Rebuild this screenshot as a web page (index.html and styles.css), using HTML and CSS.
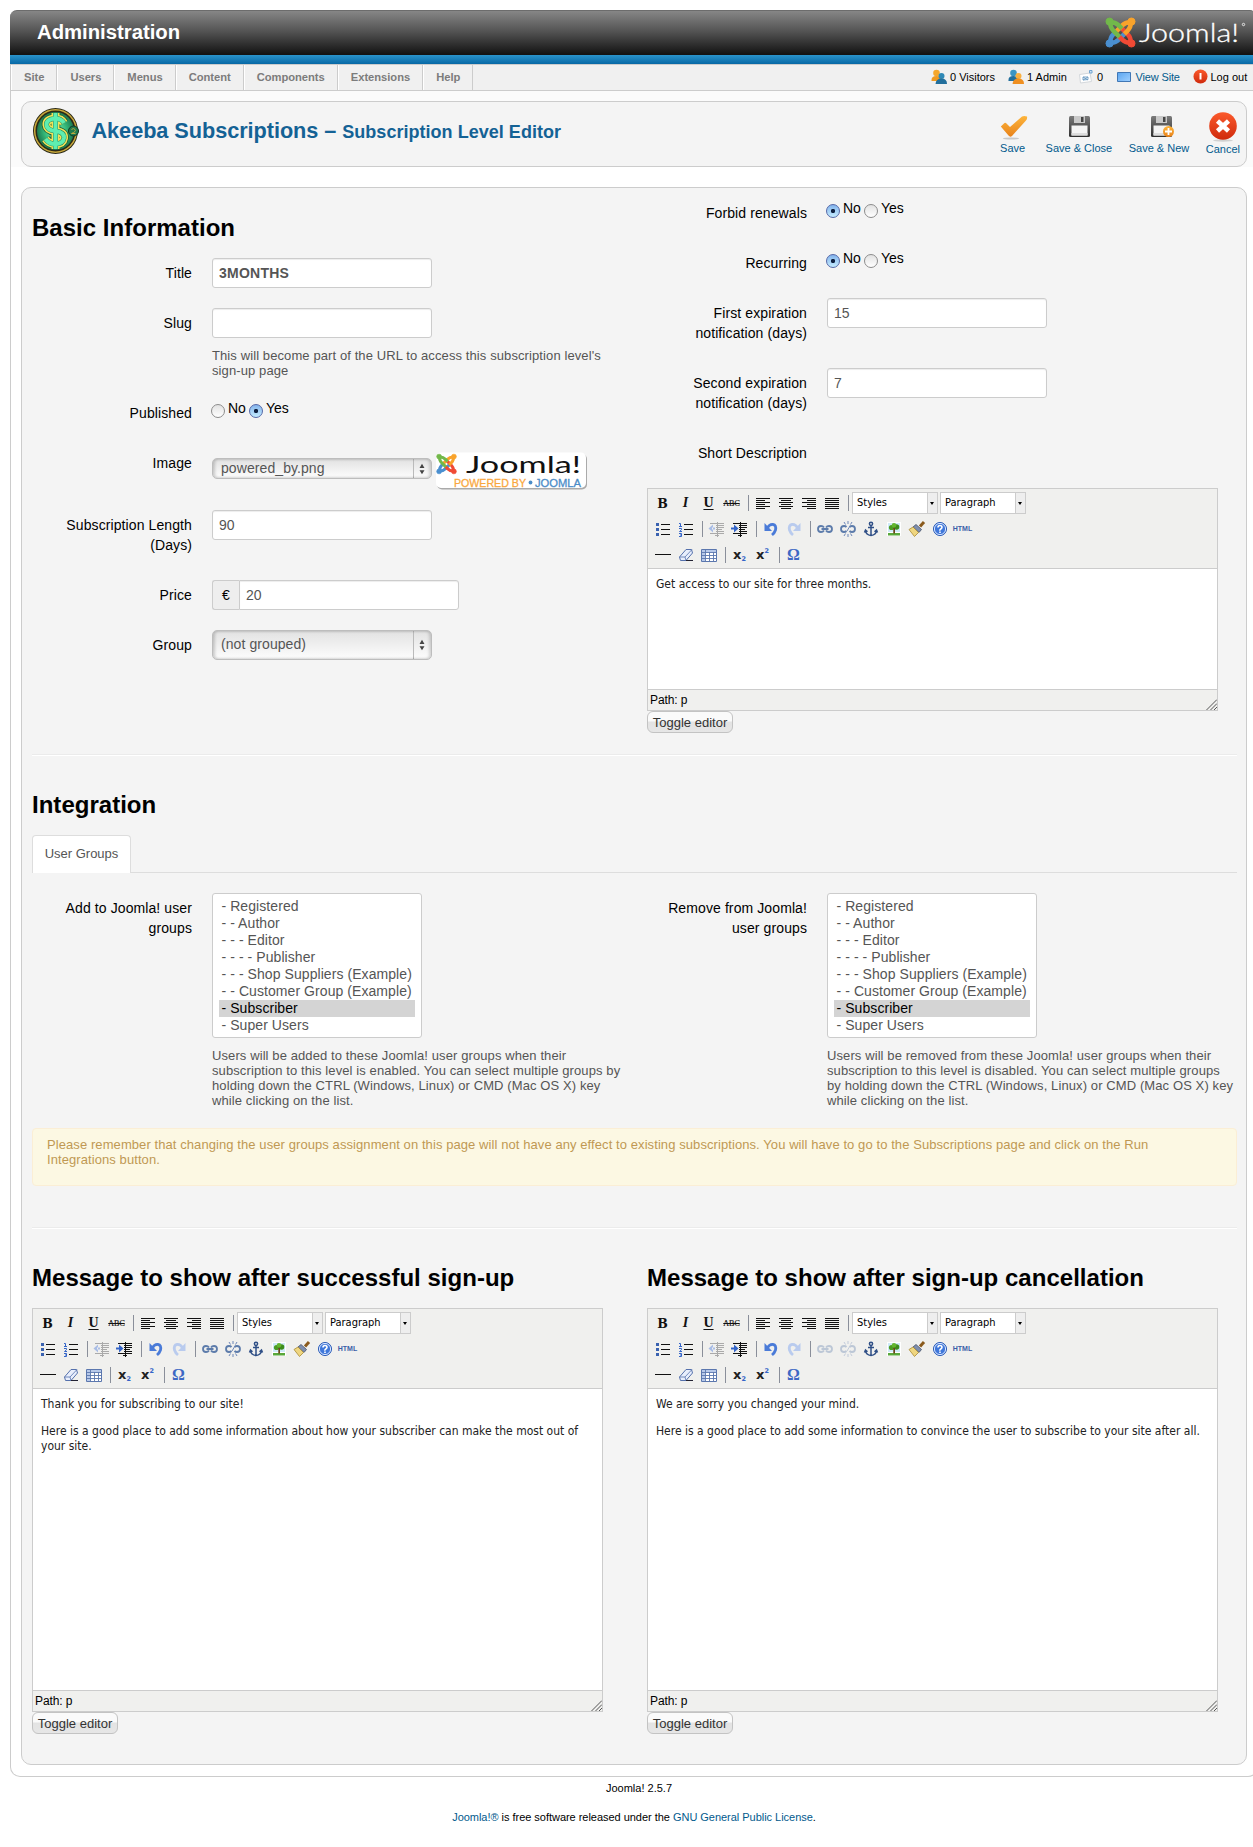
FILE: index.html
```html
<!DOCTYPE html>
<html lang="en">
<head>
<meta charset="utf-8">
<title>Administration - Subscription Level Editor</title>
<link rel="stylesheet" href="styles.css">
</head>
<body>
<svg class="sprite" width="0" height="0" aria-hidden="true">
  <defs>
    <linearGradient id="gOrange" x1="0" y1="0" x2="0" y2="1"><stop offset="0" stop-color="#fdb53c"/><stop offset="1" stop-color="#e8821a"/></linearGradient>
    <linearGradient id="gRed" x1="0" y1="0" x2="0" y2="1"><stop offset="0" stop-color="#fb5a2c"/><stop offset="1" stop-color="#cf2a0c"/></linearGradient>
    <linearGradient id="gDisk" x1="0" y1="0" x2="0" y2="1"><stop offset="0" stop-color="#7b7b7b"/><stop offset="1" stop-color="#2f2f2f"/></linearGradient>
    <linearGradient id="gScreen" x1="0" y1="0" x2="1" y2="1"><stop offset="0" stop-color="#5aa5f0"/><stop offset="1" stop-color="#9fd0ff"/></linearGradient>
    <radialGradient id="gCoin"><stop offset="0" stop-color="#7dfcc0"/><stop offset=".6" stop-color="#35b878"/><stop offset="1" stop-color="#1d7a50"/></radialGradient>
    <path id="strand" d="M15 20.500 9 14.500Q5 10.500 5.500 5.500 10.500 5 14.500 9L17.500 12" fill="none" stroke-width="4.700"/>
    <path id="dollar" d="M32 16Q29 11 22.500 11.500 14 12.500 14.500 18 15 23 23 24 32.500 25 32 31 31 37 23 37 17 37 13.500 32M23.500 6v36" fill="none"/>
  </defs>
  <symbol id="joomla" viewBox="0 0 32 32">
    <g stroke="#4a8fd0" fill="#4a8fd0" transform="rotate(270 16 16)"><use href="#strand"/><circle cx="4.700" cy="4.700" r="3.700"/></g>
    <g stroke="#f04a35" fill="#f04a35" transform="rotate(180 16 16)"><use href="#strand"/><circle cx="4.700" cy="4.700" r="3.700"/></g>
    <g stroke="#f9a32b" fill="#f9a32b" transform="rotate(90 16 16)"><use href="#strand"/><circle cx="4.700" cy="4.700" r="3.700"/></g>
    <g stroke="#72b84a" fill="#72b84a"><use href="#strand"/><circle cx="4.700" cy="4.700" r="3.700"/></g>
  </symbol>
  <symbol id="disk" viewBox="0 0 22 24">
    <path d="M1 2.500Q1 1 2.500 1H20.500Q22 1 22 2.500V20.500Q22 22 20.500 22H2.500Q1 22 1 20.500Z" fill="url(#gDisk)"/>
    <path d="M6 1h11v7H6z" fill="#c9c9c9"/><path d="M13 2h2.500v5H13z" fill="#444"/>
    <path d="M3.500 10.500h16v10h-16z" fill="#f4f4f4"/><path d="M3.500 18h16v2.500h-16z" fill="#ddd"/>
  </symbol>
  <symbol id="people-a" viewBox="0 0 16 16">
    <circle cx="5.500" cy="4" r="3.300" fill="#f5a72c"/><path d="M.5 12Q0 7 5.500 7T11 12Z" fill="#f09a20"/>
    <circle cx="10.500" cy="7" r="3" fill="#2f88b5"/><path d="M4.500 15Q5 9.500 10.500 9.500T16 15Z" fill="#226f9c"/>
  </symbol>
  <symbol id="people-b" viewBox="0 0 16 16">
    <circle cx="5.500" cy="4" r="3.300" fill="#3a95c4"/><path d="M.5 12Q0 7 5.500 7T11 12Z" fill="#226f9c"/>
    <circle cx="10.500" cy="7" r="3" fill="#f9b040"/><path d="M4.500 15Q5 9.500 10.500 9.500T16 15Z" fill="#ef8f20"/>
  </symbol>

  <symbol id="i-left" viewBox="0 0 20 20"><path d="M3 5.500h14M3 7.500h9M3 9.500h14M3 11.500h9M3 13.500h14M3 15.500h9" stroke="#111"/></symbol>
  <symbol id="i-center" viewBox="0 0 20 20"><path d="M3 5.500h14M5 7.500h10M3 9.500h14M5 11.500h10M3 13.500h14M5 15.500h10" stroke="#111"/></symbol>
  <symbol id="i-right" viewBox="0 0 20 20"><path d="M3 5.500h14M8 7.500h9M3 9.500h14M8 11.500h9M3 13.500h14M8 15.500h9" stroke="#111"/></symbol>
  <symbol id="i-full" viewBox="0 0 20 20"><path d="M3 5.500h14M3 7.500h14M3 9.500h14M3 11.500h14M3 13.500h14M3 15.500h14" stroke="#111"/></symbol>
  <symbol id="i-ul" viewBox="0 0 20 20"><path d="M8 5.500h9M8 10.500h9M8 15.500h9" stroke="#111"/><path d="M3 4h3v3H3zM3 9h3v3H3zM3 14h3v3H3z" fill="#3a62b0"/></symbol>
  <symbol id="i-ol" viewBox="0 0 20 20"><path d="M8 5.500h9M8 10.500h9M8 15.500h9" stroke="#111"/><path d="M3 4.500h1.500V7M3 7.500h3M3 9.500h2.500v1.200L3.500 12.500h2.500M3 14.500h2.500v3H3M4 16h1.500" fill="none" stroke="#3465c8"/></symbol>
  <symbol id="i-outdent" viewBox="0 0 20 20"><path d="M3 4.500h14M9 6.500h8M9 8.500h8M9 10.500h6M9 12.500h8M3 14.500h14M8 16.500h4" stroke="#aaa"/><path d="M10.500 3v15" stroke="#aaa" stroke-dasharray="1 1"/><path d="M6 5.500 1.500 9.500 6 13.500zM5 8.500h3v2H5z" fill="#a9bde6"/></symbol>
  <symbol id="i-indent" viewBox="0 0 20 20"><path d="M3 4.500h14M9 6.500h8M9 8.500h8M9 10.500h6M9 12.500h8M3 14.500h14M8 16.500h4" stroke="#111"/><path d="M10.500 3v15" stroke="#111" stroke-dasharray="1 1"/><path d="M4 5.500 8.500 9.500 4 13.500zM1 8.500h4v2H1z" fill="#3465c8"/></symbol>
  <symbol id="i-undo" viewBox="0 0 20 20"><path d="M6 9.500Q8.500 5 12 5.500T14.500 11Q13.500 14 11 16" fill="none" stroke="#4a7bd8" stroke-width="2.800"/><path d="M3.500 4v8h7.500z" fill="#4a7bd8"/></symbol>
  <symbol id="i-redo" viewBox="0 0 20 20"><path d="M14 9.500Q11.500 5 8 5.500T5.500 11Q6.500 14 9 16" fill="none" stroke="#b9cbee" stroke-width="2.800"/><path d="M16.500 4v8H9z" fill="#b9cbee"/></symbol>
  <symbol id="i-link" viewBox="0 0 20 20"><g fill="none" stroke="#5d7cab" stroke-width="1.800"><path d="M9 8.500Q8 7 6 7 3 7 3 10t3 3q2 0 3-1.500M11 8.500Q12 7 14 7q3 0 3 3t-3 3q-2 0-3-1.500M6.500 10h7"/></g></symbol>
  <symbol id="i-unlink" viewBox="0 0 20 20"><g fill="none" stroke="#5d7cab" stroke-width="1.800"><path d="M8.500 8Q7.500 7 6 7 3 7 3 10t3 3q1.500 0 2.500-1M11.500 8Q12.500 7 14 7q3 0 3 3t-3 3q-1.500 0-2.500-1"/></g><path d="M10 2v3M10 15v3M6 3l1.500 2.500M14 3l-1.500 2.500M6 17l1.500-2.500M14 17l-1.500-2.500M9 12l3-5" stroke="#6d87b8" fill="none"/></symbol>
  <symbol id="i-anchor" viewBox="0 0 20 20"><g fill="none" stroke="#2f4f86" stroke-width="1.500"><circle cx="10" cy="4.800" r="1.600"/><path d="M10 6.500v10M7 8.500h6M4.500 11.500Q5 16 10 16.500 15 16 15.500 11.500M3.500 13.500l1-2.500 2 1.800M16.500 13.500l-1-2.500-2 1.800"/></g></symbol>
  <symbol id="i-image" viewBox="0 0 20 20"><path d="M3 3h14v14H3z" fill="#fff"/><path d="M4 4h12v9H4z" fill="#cfeaf8"/><path d="M4 14h12v2.500H4z" fill="#58a83a"/><circle cx="7.500" cy="8.500" r="2.600" fill="#4c9b22"/><circle cx="12.500" cy="8" r="2.800" fill="#3c8c1a"/><circle cx="10" cy="6.300" r="2.300" fill="#63b52e"/><path d="M9.300 9h1.700v5.500H9.300z" fill="#6a4418"/></symbol>
  <symbol id="i-clean" viewBox="0 0 20 20"><path d="M17 3 13 7.500" stroke="#8a5a1c" stroke-width="3"/><path d="M9 5.500 14.500 10.500 12 13.500 6 8z" fill="#7f8fae" stroke="#44506a" stroke-width=".8"/><path d="M6 8 11.500 13.500 7.500 17.500 2 10.500z" fill="#efd680" stroke="#a88a34" stroke-width=".8"/></symbol>
  <symbol id="i-help" viewBox="0 0 20 20"><circle cx="10" cy="10" r="6.500" fill="#3f77da" stroke="#2758b4"/><circle cx="10" cy="10" r="5.600" fill="none" stroke="#d6e4ff"/><path d="M8 8.500Q8 6.500 10 6.500T12 8.300Q12 9.300 10.800 10T10 11.700M10 12.600v1.500" stroke="#fff" stroke-width="1.600" fill="none"/></symbol>
  <symbol id="i-rule" viewBox="0 0 20 20"><path d="M2 9.500h16" stroke="#111"/></symbol>
  <symbol id="i-eraser" viewBox="0 0 20 20"><path d="M3.500 12 10 4.500h5.500L16.500 8 10 15.500H4.500z" fill="#e8eefc" stroke="#5571ac"/><path d="M3.500 12h5.500l7-7.500M9 12l1 3.500" fill="none" stroke="#5571ac" stroke-width=".8"/><path d="M10 15.500h7" stroke="#223"/></symbol>
  <symbol id="i-table" viewBox="0 0 20 20"><path d="M2.500 4.500h15v12h-15z" fill="#fff" stroke="#5b77ae"/><path d="M3 5h14v2.500H3zM3 5h3v11H3z" fill="#b7c9ea"/><path d="M2.500 7.500h15M2.500 10.500h15M2.500 13.500h15M6.500 4.500v12M10.500 7v9.500M14.500 7v9.500" stroke="#5b77ae" stroke-width=".9"/></symbol>
  <symbol id="i-grip" viewBox="0 0 12 12"><path d="M1.500 12 12 1.500M5.500 12 12 5.500M9 12l3-3" stroke="#555"/></symbol>
</svg>

<template id="editor-toolbar">
  <div class="tb-row">
    <span class="tb-btn tb-serif tb-b">B</span><span class="tb-btn tb-serif tb-i">I</span><span class="tb-btn tb-serif tb-u">U</span><span class="tb-btn tb-serif tb-s">ABC</span><span class="tb-sep"></span>
    <svg class="tb-btn"><use href="#i-left"/></svg><svg class="tb-btn"><use href="#i-center"/></svg><svg class="tb-btn"><use href="#i-right"/></svg><svg class="tb-btn"><use href="#i-full"/></svg><span class="tb-sep"></span>
    <span class="tb-select tb-select-first">Styles<i></i></span><span class="tb-select">Paragraph<i></i></span>
  </div>
  <div class="tb-row">
    <svg class="tb-btn"><use href="#i-ul"/></svg><svg class="tb-btn"><use href="#i-ol"/></svg><span class="tb-sep"></span>
    <svg class="tb-btn"><use href="#i-outdent"/></svg><svg class="tb-btn"><use href="#i-indent"/></svg><span class="tb-sep"></span>
    <svg class="tb-btn"><use href="#i-undo"/></svg><svg class="tb-btn"><use href="#i-redo"/></svg><span class="tb-sep"></span>
    <svg class="tb-btn tb-link"><use href="#i-link"/></svg><svg class="tb-btn tb-link"><use href="#i-unlink"/></svg><svg class="tb-btn"><use href="#i-anchor"/></svg><svg class="tb-btn"><use href="#i-image"/></svg><svg class="tb-btn"><use href="#i-clean"/></svg><svg class="tb-btn"><use href="#i-help"/></svg><span class="tb-btn tb-html">HTML</span>
  </div>
  <div class="tb-row">
    <svg class="tb-btn"><use href="#i-rule"/></svg><svg class="tb-btn"><use href="#i-eraser"/></svg><svg class="tb-btn"><use href="#i-table"/></svg><span class="tb-sep"></span>
    <span class="tb-btn tb-x">x<sub>2</sub></span><span class="tb-btn tb-x">x<sup>2</sup></span><span class="tb-sep"></span>
    <span class="tb-btn tb-omega">Ω</span>
  </div>
</template>

<div class="page">
  <header class="header">
    <h1 class="site-title">Administration</h1>
    <svg class="brand" width="142" height="34" viewBox="0 0 142 34"><use href="#joomla" x="0" y="1" width="31" height="31"/><text class="brand-text" x="34" y="25.500" textLength="100" lengthAdjust="spacingAndGlyphs">Joomla!</text><circle cx="138.500" cy="8.500" r="1.200" fill="none" stroke="#fff" stroke-width=".8"/></svg>
  </header>
  <div class="stripe"></div>
  <nav class="menubar">
    <ul class="menu">
      <li>Site</li><li>Users</li><li>Menus</li><li>Content</li><li>Components</li><li>Extensions</li><li>Help</li>
    </ul>
    <div class="status">
      <span class="st st-visitors"><svg width="16" height="16"><use href="#people-a"/></svg>0 Visitors</span>
      <span class="st st-admin"><svg width="16" height="16"><use href="#people-b"/></svg>1 Admin</span>
      <span class="st st-msg"><svg width="16" height="16" viewBox="0 0 16 16"><path d="M1.500 5.500 12 4l1.500 8.500L2.500 14z" fill="#fff" stroke="#d4d8dc"/><path d="M5 8l5 3M5 11l5-3M5 8v3l5-.5V8z" stroke="#6b9cc4" stroke-width=".9" fill="none"/><path d="M11.500 1.500h2.500V4h-2.500z" fill="#cfe3f5" stroke="#6fa3d0"/></svg>0</span>
      <span class="st st-view"><svg width="15" height="16" viewBox="0 0 15 16"><path d="M.5 3.500h13v9H.5z" fill="url(#gScreen)" stroke="#4177b5"/></svg>View Site</span>
      <span class="st st-logout"><svg width="15" height="16" viewBox="0 0 15 16"><circle cx="7.500" cy="7.500" r="7" fill="url(#gRed)"/><path d="M7.500 4v6.500" stroke="#fff" stroke-width="2"/></svg>Log out</span>
    </div>
  </nav>

  <div class="toolbar-area">
    <div class="toolbar-box">
      <svg class="coin" width="48" height="48" viewBox="0 0 48 48"><ellipse cx="23.500" cy="24" rx="22.500" ry="23" fill="#2b2a16"/><ellipse cx="23.500" cy="24" rx="20.800" ry="21.200" fill="none" stroke="#c9a83c" stroke-width="1.500"/><ellipse cx="23.500" cy="24" rx="18.500" ry="19" fill="url(#gCoin)"/><use href="#dollar" stroke="#1c5a33" stroke-width="9.500"/><use href="#dollar" stroke="#f2e358" stroke-width="8"/><use href="#dollar" stroke="#2c8a5c" stroke-width="5"/><use href="#dollar" stroke="#5eeeb0" stroke-width="4"/><circle cx="41.500" cy="24" r="5" fill="#1f7a4c" stroke="#12331f"/><path d="M39.500 22.500q2-2 3.500 0t-3.500 4h4" fill="none" stroke="#bfa83c"/></svg>
      <h2 class="page-title">Akeeba Subscriptions – <small>Subscription Level Editor</small></h2>
      <ul class="actions">
        <li class="a-save"><svg width="28" height="28" viewBox="0 0 28 28"><ellipse cx="11" cy="26.500" rx="8" ry="1" fill="#c8c8c8"/><path d="M.8 14.500 4.500 11 Q5.500 10.500 6.500 11.500L10 15 22 4.500Q24 3.500 27 4.500 27.500 7 26 8.500L12 24Q10 25.500 8.500 23.500Z" fill="url(#gOrange)"/></svg>Save</li>
        <li class="a-close"><svg width="22" height="28" viewBox="0 0 22 28"><use href="#disk" y="3" width="22" height="24"/></svg>Save &amp; Close</li>
        <li class="a-new"><svg width="28" height="28" viewBox="0 0 28 28"><use href="#disk" x="3" y="3" width="22" height="24"/><circle cx="21.500" cy="19.500" r="5.500" fill="url(#gOrange)"/><path d="M21.500 16v7M18 19.500h7" stroke="#fff" stroke-width="1.800"/></svg>Save &amp; New</li>
        <li class="a-cancel"><svg width="28" height="30" viewBox="0 0 28 30"><ellipse cx="14" cy="28.500" rx="10" ry="1.200" fill="#d0d0d0"/><circle cx="14" cy="14" r="13.800" fill="url(#gRed)"/><path d="M8.500 9 19.500 19M19.500 9 8.500 19" stroke="#fff" stroke-width="4.600"/></svg>Cancel</li>
      </ul>
    </div>
  </div>

  <main class="content">
    <section class="cols basic">
      <div>
        <h3 class="heading heading-first">Basic Information</h3>
        <div class="row"><label>Title</label><div class="control"><input class="text strong" value="3MONTHS"></div></div>
        <div class="row"><label>Slug</label><div class="control"><input class="text" value=""><p class="help">This will become part of the URL to access this subscription level's<br>sign-up page</p></div></div>
        <div class="row"><label>Published</label><div class="control radios"><input type="radio" name="pub"><span>No</span><input type="radio" name="pub" checked><span>Yes</span></div></div>
        <div class="row row-image"><label>Image</label><div class="control image-control"><div class="select select-small">powered_by.png<svg class="updown" width="6" height="12" viewBox="0 0 8 14"><path d="M4 0l3.300 5.500H.7zM4 14l3.300-5.500H.7z"/></svg></div>
          <svg class="badge" width="154" height="39" viewBox="0 0 154 39"><rect x="2" y="2" width="150" height="35.500" rx="5" fill="#aaa"/><rect x="1" y=".5" width="150" height="35.500" rx="5" fill="#fff"/><use href="#joomla" x="1" y="1" width="21" height="22"/><text class="badge-name" x="31" y="20.500" textLength="115" lengthAdjust="spacingAndGlyphs">Joomla!</text><text class="badge-sub" x="19" y="35" textLength="72" lengthAdjust="spacingAndGlyphs" fill="#f9a73e" stroke="#f9a73e">POWERED BY</text><circle cx="95.500" cy="30.500" r="1.900" fill="#4b8cc8"/><text class="badge-sub" x="100" y="35" textLength="46" lengthAdjust="spacingAndGlyphs" fill="#4b8cc8" stroke="#4b8cc8">JOOMLA</text></svg></div></div>
        <div class="row row-double"><label>Subscription Length<br>(Days)</label><div class="control"><input class="text" value="90"></div></div>
        <div class="row"><label>Price</label><div class="control prepend"><span class="addon">€</span><input class="text" value="20"></div></div>
        <div class="row"><label>Group</label><div class="control"><div class="select">(not grouped)<svg class="updown" width="6" height="12" viewBox="0 0 8 14"><path d="M4 0l3.300 5.500H.7zM4 14l3.300-5.500H.7z"/></svg></div></div></div>
      </div>
      <div>
        <div class="row"><label>Forbid renewals</label><div class="control radios"><input type="radio" name="forbid" checked><span>No</span><input type="radio" name="forbid"><span>Yes</span></div></div>
        <div class="row"><label>Recurring</label><div class="control radios"><input type="radio" name="rec" checked><span>No</span><input type="radio" name="rec"><span>Yes</span></div></div>
        <div class="row row-double"><label>First expiration<br>notification (days)</label><div class="control"><input class="text" value="15"></div></div>
        <div class="row row-double"><label>Second expiration<br>notification (days)</label><div class="control"><input class="text" value="7"></div></div>
        <div class="row"><label>Short Description</label></div>
        <div class="editor">
          <div class="editor-toolbar"></div>
          <div class="editor-body"><p>Get access to our site for three months.</p></div>
          <div class="editor-status">Path: p<svg class="grip" width="12" height="12"><use href="#i-grip"/></svg></div>
        </div>
        <button class="toggle">Toggle editor</button>
      </div>
    </section>

    <hr class="rule">
    <h3 class="heading">Integration</h3>
    <div class="tabs"><span class="tab">User Groups</span></div>
    <section class="cols">
      <div class="row"><label>Add to Joomla! user<br>groups</label><div class="control">
        <ul class="listbox"><li>- Registered</li><li>- - Author</li><li>- - - Editor</li><li>- - - - Publisher</li><li>- - - Shop Suppliers (Example)</li><li>- - Customer Group (Example)</li><li class="selected">- Subscriber</li><li>- Super Users</li></ul>
        <p class="help">Users will be added to these Joomla! user groups when their<br>subscription to this level is enabled. You can select multiple groups by<br>holding down the CTRL (Windows, Linux) or CMD (Mac OS X) key<br>while clicking on the list.</p></div></div>
      <div class="row"><label>Remove from Joomla!<br>user groups</label><div class="control">
        <ul class="listbox"><li>- Registered</li><li>- - Author</li><li>- - - Editor</li><li>- - - - Publisher</li><li>- - - Shop Suppliers (Example)</li><li>- - Customer Group (Example)</li><li class="selected">- Subscriber</li><li>- Super Users</li></ul>
        <p class="help">Users will be removed from these Joomla! user groups when their<br>subscription to this level is disabled. You can select multiple groups<br>by holding down the CTRL (Windows, Linux) or CMD (Mac OS X) key<br>while clicking on the list.</p></div></div>
    </section>
    <div class="alert">Please remember that changing the user groups assignment on this page will not have any effect to existing subscriptions. You will have to go to the Subscriptions page and click on the Run<br>Integrations button.</div>

    <hr class="rule">
    <section class="cols">
      <div>
        <h3 class="heading">Message to show after successful sign-up</h3>
        <div class="editor editor-tall">
          <div class="editor-toolbar"></div>
          <div class="editor-body"><p>Thank you for subscribing to our site!</p><p>Here is a good place to add some information about how your subscriber can make the most out of<br>your site.</p></div>
          <div class="editor-status">Path: p<svg class="grip" width="12" height="12"><use href="#i-grip"/></svg></div>
        </div>
        <button class="toggle">Toggle editor</button>
      </div>
      <div>
        <h3 class="heading">Message to show after sign-up cancellation</h3>
        <div class="editor editor-tall editor-nolink">
          <div class="editor-toolbar"></div>
          <div class="editor-body"><p>We are sorry you changed your mind.</p><p>Here is a good place to add some information to convince the user to subscribe to your site after all.</p></div>
          <div class="editor-status">Path: p<svg class="grip" width="12" height="12"><use href="#i-grip"/></svg></div>
        </div>
        <button class="toggle">Toggle editor</button>
      </div>
    </section>
  </main>
</div>
<footer class="footer">
  <p>Joomla! 2.5.7</p>
  <p class="license"><a>Joomla!®</a> is free software released under the <a>GNU General Public License</a>.</p>
</footer>
<script src="editor.js"></script>
</body>
</html>
```
FILE: editor.js
```js
// Every editor shares the same toolbar markup.
const toolbar = document.getElementById('editor-toolbar');
document.querySelectorAll('.editor-toolbar').forEach(function (host) {
  host.appendChild(toolbar.content.cloneNode(true));
});
```
FILE: styles.css
```css
* { box-sizing: border-box; }
html { overflow: hidden; }
body {
  margin: 0;
  width: 1253px;
  height: 1847px;
  overflow: hidden;
  background: #fff;
  color: #000;
  font: 14px/20px "Liberation Sans", Arial, sans-serif;
}
ul, p, h1, h2, h3 { margin: 0; padding: 0; }
ul { list-style: none; }
svg { display: block; flex: none; }
.sprite { position: absolute; }

.page {
  width: 1248px;
  margin: 10px 0 0 10px;
  border: 1px solid #ccc;
  border-top: 0;
  border-radius: 10px;
  height: 1767px;
}
.header {
  display: flex;
  justify-content: space-between;
  width: 1244px;
  height: 45px;
  margin-left: -1px;
  padding: 0 7px 0 27px;
  border-top: 1px solid #6c6c6c;
  border-radius: 7px 4px 0 0;
  background: linear-gradient(#868686, #555 45%, #111);
}
.site-title { color: #fff; font-size: 20.300px; line-height: 43px; }
.brand { margin-top: 5px; overflow: visible; }
.brand-text { font: 300 25px "Lato", sans-serif; fill: #fff; stroke: #fff; stroke-width: .3px; }
.stripe { height: 9px; margin-left: -1px; background: linear-gradient(#2a93cb, #0768a5); }

.menubar {
  display: flex;
  justify-content: space-between;
  align-items: flex-start;
  width: 1242px;
  height: 27px;
  border-top: 1px solid #ccc;
  border-bottom: 1px solid #ccc;
  background: #f0f0f0;
  line-height: 25px;
}
.menu { display: flex; font-size: 11.200px; font-weight: bold; color: #7c7c7c; }
.menu li { padding: 0 12px 0 13px; border-right: 1px solid #ccc; box-shadow: inset 1px 0 #fff; letter-spacing: -.03px; }
.status { display: flex; font-size: 11px; }
.st { display: flex; align-items: center; gap: 3px; height: 24px; white-space: nowrap; }
.st svg { margin-top: -1px; }
.st-visitors { width: 77px; }
.st-admin { width: 70px; }
.st-msg { width: 38.500px; }
.st-view { width: 76px; color: #025a8d; letter-spacing: -.15px; gap: 4px; }
.st-logout { width: 60.500px; }

.toolbar-area { padding: 10px 10px 0; background: #fbfbfb; width: 1246px; }
.toolbar-box {
  display: flex;
  height: 66px;
  padding-left: 10px;
  border: 1px solid #ccc;
  border-radius: 10px;
  background: #f4f4f4;
}
.coin { margin-top: 5px; }
.page-title { margin-left: 11.500px; font-size: 21.700px; line-height: 57px; color: #146295; white-space: nowrap; letter-spacing: -.05px; }
.page-title small { font-size: 18px; letter-spacing: .03px; }
.actions { display: flex; margin-left: auto; padding: 10px 6px 0 0; gap: 16.500px; font-size: 11px; line-height: 14px; color: #025a8d; }
.actions li { display: flex; flex-direction: column; align-items: center; height: 43px; justify-content: space-between; white-space: nowrap; }
.a-save { width: 28px; margin-right: 1px; }
.actions .a-save { align-items: flex-start; }
.a-new svg { margin-left: 4px; }

.content {
  width: 1226px;
  height: 1578px;
  margin: 20px 10px 0;
  padding: 10px 10px 0;
  border: 1px solid #ccc;
  border-radius: 10px;
  background: #f4f4f4;
}
.cols { display: grid; grid-template-columns: 571px 571px; column-gap: 44px; }
.basic { height: 556px; }
.heading { font-size: 24px; line-height: 36px; margin-bottom: 12px; white-space: nowrap; letter-spacing: .02px; }
.heading-first { margin-top: 12px; }
.rule { width: 1205px; height: 2px; margin: 0 0 31px; border: 0; border-top: 1px solid #ebebeb; border-bottom: 1px solid #fff; }

.row { display: grid; grid-template-columns: 160px 1fr; column-gap: 20px; min-height: 30px; margin-bottom: 20px; align-items: start; }
.row-image { height: 42px; }
.row-double { min-height: 50px; }
.row label { padding-top: 5px; text-align: right; white-space: nowrap; letter-spacing: .1px; }
.text {
  display: block;
  width: 220px;
  height: 30px;
  margin: 0;
  padding: 0 6px;
  border: 1px solid #ccc;
  border-radius: 3px;
  background: #fff;
  box-shadow: inset 0 1px 1px rgba(0, 0, 0, .075);
  color: #555;
  font: 14px "Liberation Sans", Arial, sans-serif;
}
.strong { font-weight: bold; letter-spacing: .25px; }
.help { margin-top: 10px; font-size: 13px; line-height: 15px; color: #555; white-space: nowrap; letter-spacing: .1px; }
.radios { display: flex; margin-left: -1px; }
.radios input {
  appearance: none;
  width: 14px;
  height: 14px;
  margin: 6px 3px 0 0;
  border: 1px solid #8c8c8c;
  border-radius: 50%;
  background: linear-gradient(#e2e2e2, #fff);
}
.radios input:checked { border-color: #5568a8; background: radial-gradient(circle, #0f2140 0 1.800px, transparent 2.500px), linear-gradient(#84b4ec, #c4ecff); }
.radios span { margin-right: 3px; }
.select {
  display: flex;
  justify-content: space-between;
  align-items: center;
  width: 220px;
  height: 30px;
  padding: 0 6px 2px 8px;
  border: 1px solid #bdbdbd;
  border-radius: 5px;
  background: linear-gradient(90deg, transparent 200px, #bbb 200px 201px, transparent 201px), linear-gradient(#e2e2e2, #fdfdfd);
  box-shadow: inset 2px 0 3px rgba(0, 0, 0, .18), inset -2px 0 3px rgba(0, 0, 0, .15);
  color: #555;
  letter-spacing: .08px;
}
.updown { margin-top: 2px; fill: #444; }
.image-control { display: flex; gap: 3px; }
.select-small { height: 21px; margin-top: 10px; padding-bottom: 2px; }
.badge { margin-top: 4px; overflow: visible; }
.badge-name { font: 400 23px "Lato", sans-serif; fill: #111; }
.badge-sub { font: 11.500px "Liberation Sans", Arial, sans-serif; stroke-width: .3px; }
.prepend { display: flex; }
.addon { width: 27px; height: 30px; border: 1px solid #ccc; border-right: 0; border-radius: 3px 0 0 3px; background: #eee; line-height: 28px; text-align: center; }
.prepend .text { border-radius: 0 3px 3px 0; }

.editor { width: 571px; height: 223px; border: 1px solid #ccc; background: #f0f0ee; display: flex; flex-direction: column; }
.editor-tall { height: 404px; }
.editor-toolbar { height: 80px; padding: 1px 0 0 3px; border-bottom: 1px solid #ccc; }
.tb-row { display: flex; align-items: center; height: 26px; }
.tb-btn { width: 20px; height: 20px; margin: 0 1.500px; flex: none; text-align: center; line-height: 20px; }
.tb-sep { width: 1px; height: 16px; margin: 0 2px 0 5px; background: #8a8f9a; flex: none; }
.tb-serif { font: bold 14px/20px "DejaVu Serif", serif; color: #111; }
.tb-b { font-size: 12.500px; line-height: 22px; }
.tb-i { font-style: italic; font-size: 14px; font-family: "Liberation Serif", serif; }
.tb-u { text-decoration: underline; font: bold 14px/20px "Liberation Serif", serif; text-underline-offset: 2px; }
.tb-s { font: 8px/22px "Liberation Serif", serif; text-decoration: line-through; -webkit-text-stroke: .2px #111; }
.tb-select {
  position: relative;
  width: 86px;
  height: 22px;
  margin: 0 2px 0 0;
  padding-left: 4px;
  border: 1px solid #ccc;
  background: #fff;
  font: 11px/20px "DejaVu Sans Condensed", "DejaVu Sans", sans-serif;
  font-stretch: condensed;
}
.tb-select-first { margin-left: 1px; }
.tb-select i { position: absolute; top: 0; right: 0; width: 10px; height: 20px; border-left: 1px solid #ccc; background: #eee; }
.tb-select i::after { content: ""; position: absolute; left: 2px; top: 9px; border: 2.500px solid transparent; border-top: 3px solid #000; border-bottom: 0; }
.tb-html { font: bold 7px/20px "Liberation Sans", Arial, sans-serif; color: #3a5ea8; }
.tb-x { font: bold 13px/20px "DejaVu Sans", sans-serif; color: #222; white-space: nowrap; }
.tb-x sub, .tb-x sup { font-size: 6.500px; line-height: 0; color: #3465c8; }
.tb-x sub { vertical-align: -2px; }
.tb-x sup { vertical-align: 6px; }
.tb-omega { font: bold 16px/20px "Liberation Serif", serif; color: #3d68c4; }
.editor-nolink .tb-link { opacity: .35; }
.editor-body { flex: 1; padding: 8px 8px 0; background: #fff; color: #222; font: 12px/15px "DejaVu Sans Condensed", "DejaVu Sans", sans-serif; font-stretch: condensed; white-space: nowrap; }
.editor-body p { margin-bottom: 12px; }
.editor-status { display: flex; justify-content: space-between; align-items: flex-end; height: 21px; padding-left: 2px; border-top: 1px solid #ccc; font-size: 12px; line-height: 20px; letter-spacing: -.1px; }
.toggle { display: block; width: 86px; height: 22px; margin-top: 0; padding: 0; border: 1px solid #c3c3c3; border-radius: 6px; background: linear-gradient(#fafafa 0 45%, #e3e3e3 50%, #e6e6e6); color: #333; font: 13px/19px "Liberation Sans", Arial, sans-serif; white-space: nowrap; }

.tabs { display: flex; width: 1205px; height: 38px; margin-bottom: 20px; border-bottom: 1px solid #ddd; }
.tab { height: 38px; width: 99px; border: 1px solid #ddd; border-bottom: 0; border-radius: 4px 4px 0 0; background: #fff; color: #555; font-size: 13px; line-height: 36px; text-align: center; }
.listbox { width: 210px; height: 145px; padding: 4px 6px; border: 1px solid #ccc; border-radius: 3px; background: #fff; color: #555; line-height: 17px; white-space: nowrap; letter-spacing: .07px; }
.listbox li { padding-left: 2.500px; }
.listbox .selected { background: #d4d4d4; color: #000; }
.alert { width: 1205px; height: 58px; margin-bottom: 41px; padding: 8px 14px; border: 1px solid #fbeed5; border-radius: 4px; background: #fcf8e3; color: #c09853; font-size: 13px; line-height: 15px; white-space: nowrap; letter-spacing: .082px; }

.footer { width: 1258px; margin-left: 10px; padding-top: 1px; text-align: center; font-size: 11px; line-height: 20px; }
.footer p { margin-bottom: 9px; }
.footer .license { padding-right: 10px; letter-spacing: -.03px; }
.footer a { color: #025a8d; }
```
